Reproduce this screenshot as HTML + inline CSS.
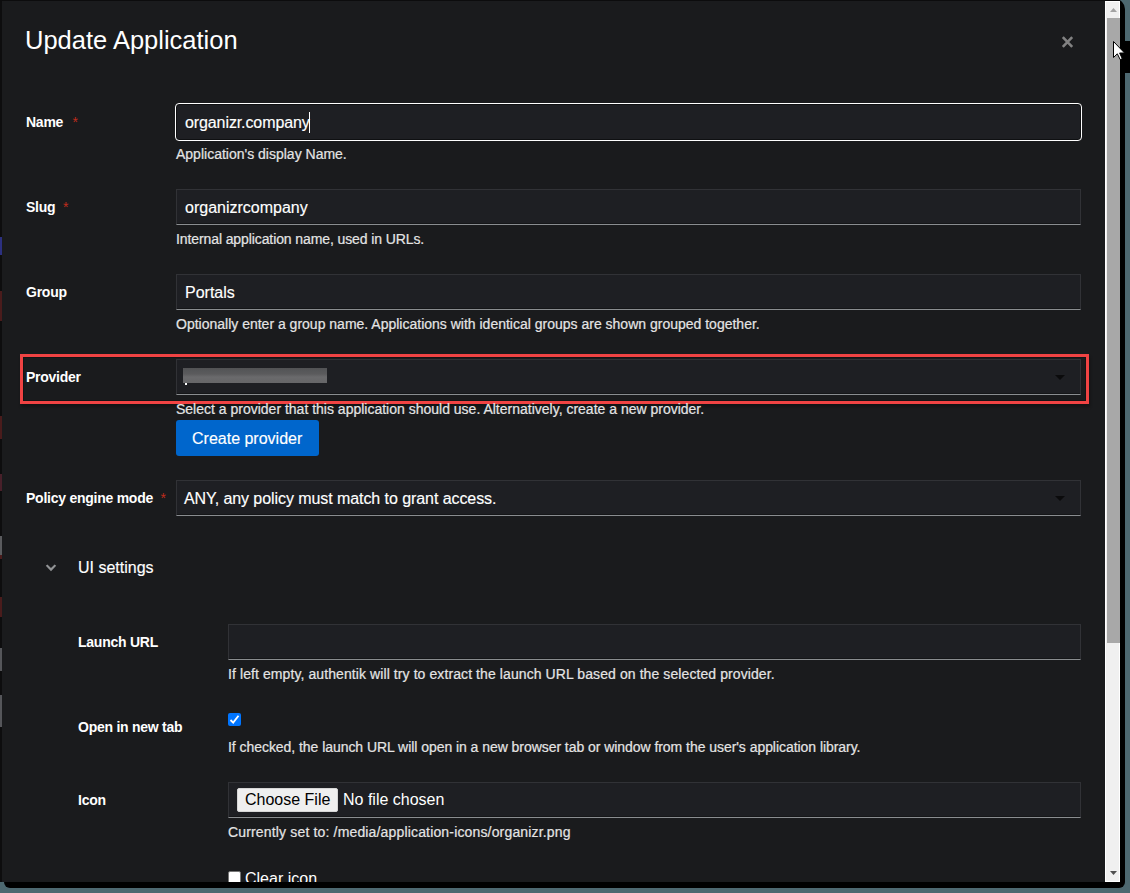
<!DOCTYPE html>
<html><head><meta charset="utf-8">
<style>
html,body{margin:0;padding:0;width:1130px;height:893px;overflow:hidden;background:#4d6870;}
body{position:relative;font-family:"Liberation Sans",sans-serif;}
.a{position:absolute;white-space:nowrap;}
#shadow{position:absolute;left:4px;top:-1px;width:1121px;height:889px;background:#000;border-radius:6px 10px 6px 6px;}
#modal{position:absolute;left:0;top:0;width:1120px;height:882px;background:#1a1b1d;overflow:hidden;}
#lstrip{position:absolute;left:0;top:0;width:2px;height:883px;background:#0d0d0e;}
#tstrip{position:absolute;left:0;top:0;width:1120px;height:1px;background:#0c0c0d;}
.lbl{font-weight:bold;font-size:14px;color:#fff;line-height:16px;letter-spacing:-0.25px;}
.req{color:#c02c1c;font-size:14px;line-height:16px;}
.help{font-size:14px;color:#e4e4e4;line-height:16px;-webkit-text-stroke:0.2px #e4e4e4;}
.inp{position:absolute;box-sizing:border-box;background:#1e1f23;border:1px solid #313236;border-bottom-color:#8a8d90;box-shadow:inset 0 -1px 0 #151618;}
.val{font-size:16px;color:#fff;line-height:18px;-webkit-text-stroke:0.15px #fff;}
</style></head><body>
<div id="shadow"></div>
<div id="modal">
  <div id="lstrip"></div>
  <div id="tstrip"></div>
  <div class="a" style="left:0;top:237px;width:2px;height:18px;background:#2c3080;"></div>
  <div class="a" style="left:0;top:291px;width:2px;height:30px;background:#4a1c1c;"></div>
  <div class="a" style="left:0;top:416px;width:2px;height:23px;background:#4a1c1c;"></div>
  <div class="a" style="left:0;top:474px;width:2px;height:17px;background:#48202a;"></div>
  <div class="a" style="left:0;top:536px;width:2px;height:19px;background:#5a5b5e;"></div>
  <div class="a" style="left:0;top:555px;width:2px;height:4px;background:#4a1c1c;"></div>
  <div class="a" style="left:0;top:597px;width:2px;height:20px;background:#4a1c1c;"></div>
  <div class="a" style="left:0;top:648px;width:2px;height:23px;background:#55565a;"></div>
  <div class="a" style="left:0;top:695px;width:2px;height:32px;background:#55565a;"></div>
  <div class="a" style="left:25px;top:26px;font-size:25.5px;color:#fff;line-height:29px;">Update Application</div>
  <svg class="a" style="left:1061px;top:35px" width="13" height="14" viewBox="0 0 13 14"><path d="M1.8 2.1L11.2 11.8M11.2 2.1L1.8 11.8" stroke="#828282" stroke-width="2.6"/></svg>

  <!-- Name -->
  <div class="a lbl" style="left:26px;top:114px;">Name</div>
  <div class="a req" style="left:72.5px;top:114px;">*</div>
  <div class="inp" style="left:175px;top:103px;width:907px;height:38px;border:1.6px solid #fff;border-radius:4px;box-shadow:inset 0 0 0 1px #0f1012;"></div>
  <div class="a val" style="left:185px;top:114px;letter-spacing:-0.1px;">organizr.company</div>
  <div class="a" style="left:309px;top:112px;width:1px;height:21px;background:#fff;"></div>
  <div class="a help" style="left:176px;top:146px;">Application's display Name.</div>

  <!-- Slug -->
  <div class="a lbl" style="left:26px;top:199px;">Slug</div>
  <div class="a req" style="left:63px;top:199px;">*</div>
  <div class="inp" style="left:176px;top:189px;width:905px;height:36px;"></div>
  <div class="a val" style="left:185px;top:199px;">organizrcompany</div>
  <div class="a help" style="left:176px;top:231px;letter-spacing:-0.1px;">Internal application name, used in URLs.</div>

  <!-- Group -->
  <div class="a lbl" style="left:26px;top:284px;">Group</div>
  <div class="inp" style="left:176px;top:274px;width:905px;height:36px;"></div>
  <div class="a val" style="left:185px;top:284px;">Portals</div>
  <div class="a help" style="left:176px;top:316px;">Optionally enter a group name. Applications with identical groups are shown grouped together.</div>

  <!-- Provider -->
  <div class="a lbl" style="left:26px;top:369px;">Provider</div>
  <div class="inp" style="left:176px;top:359px;width:905px;height:36px;"></div>
  <div class="a" style="left:183px;top:368px;width:144px;height:15px;background:linear-gradient(#525355 0%,#5b5b5d 40%,#6a6a6c 60%,#666668 100%);"></div><div class="a" style="left:185px;top:383px;width:2px;height:2px;background:#fff;"></div>
  <svg class="a" style="left:1055px;top:375px" width="10" height="5" viewBox="0 0 10 5"><path d="M0 0H10L5 5Z" fill="#0b0b0c"/></svg>
  <div class="a" style="left:20px;top:354px;width:1069px;height:50px;box-sizing:border-box;border:3px solid #f04343;box-shadow:1px 3px 3px rgba(0,0,0,0.3), inset 0 0 0 1px rgba(0,0,0,0.25);"></div>
  <div class="a help" style="left:176px;top:401px;">Select a provider that this application should use. Alternatively, create a new provider.</div>
  <div class="a" style="left:176px;top:420px;width:143px;height:36px;background:#0066cc;border-radius:3px;"></div>
  <div class="a val" style="left:192px;top:430px;">Create provider</div>

  <!-- Policy engine mode -->
  <div class="a lbl" style="left:26px;top:490px;">Policy engine mode</div>
  <div class="a req" style="left:160.5px;top:490px;">*</div>
  <div class="inp" style="left:176px;top:480px;width:905px;height:36px;"></div>
  <div class="a val" style="left:184px;top:490px;letter-spacing:-0.07px;">ANY, any policy must match to grant access.</div>
  <svg class="a" style="left:1055px;top:496px" width="10" height="5" viewBox="0 0 10 5"><path d="M0 0H10L5 5Z" fill="#0b0b0c"/></svg>

  <!-- UI settings -->
  <svg class="a" style="left:45px;top:564px" width="12" height="8" viewBox="0 0 12 8"><path d="M0.8 1.7L2.4 0.6L6 4.1L9.6 0.6L11.2 1.7L6 7.2Z" fill="#929496"/></svg>
  <div class="a val" style="left:78px;top:559px;">UI settings</div>

  <!-- Launch URL -->
  <div class="a lbl" style="left:78px;top:634px;">Launch URL</div>
  <div class="inp" style="left:228px;top:624px;width:853px;height:36px;"></div>
  <div class="a help" style="left:228px;top:666px;letter-spacing:0.09px;">If left empty, authentik will try to extract the launch URL based on the selected provider.</div>

  <!-- Open in new tab -->
  <div class="a lbl" style="left:78px;top:719px;">Open in new tab</div>
  <div class="a" style="left:228px;top:713px;width:13px;height:13px;background:#0075ff;border-radius:2px;"></div>
  <svg class="a" style="left:228px;top:713px" width="13" height="13" viewBox="0 0 13 13"><path d="M2.5 7L5.2 9.6L10.5 2.8" stroke="#fff" stroke-width="1.8" fill="none"/></svg>
  <div class="a help" style="left:228px;top:739px;letter-spacing:-0.05px;">If checked, the launch URL will open in a new browser tab or window from the user's application library.</div>

  <!-- Icon -->
  <div class="a lbl" style="left:78px;top:792px;">Icon</div>
  <div class="inp" style="left:228px;top:782px;width:853px;height:36px;"></div>
  <div class="a" style="left:237px;top:788px;width:101px;height:24px;box-sizing:border-box;background:#efefef;border:1px solid #d6d6d6;border-radius:2px;"></div>
  <div class="a" style="left:245px;top:791px;font-size:16px;color:#000;line-height:18px;">Choose File</div>
  <div class="a" style="left:343px;top:791px;font-size:16px;color:#fff;line-height:18px;">No file chosen</div>
  <div class="a help" style="left:228px;top:824px;letter-spacing:0.16px;">Currently set to: /media/application-icons/organizr.png</div>

  <div class="a" style="left:228px;top:871px;width:13px;height:13px;box-sizing:border-box;background:#fff;border:1px solid #767676;border-radius:2px;"></div>
  <div class="a" style="left:245px;top:870px;font-size:16px;color:#fff;line-height:18px;">Clear icon</div>

  <!-- scrollbar -->
  <div class="a" style="left:1105px;top:1px;width:15px;height:881px;box-sizing:border-box;background:#f0f0f0;border:1px solid #fff;"></div>
  <div class="a" style="left:1107px;top:18px;width:13px;height:625px;background:#a8a8a8;"></div>
  <svg class="a" style="left:1105px;top:1px" width="15" height="17" viewBox="0 0 15 17"><path d="M5 11H12L8.5 7Z" fill="#a3a3a3"/></svg>
  <svg class="a" style="left:1105px;top:866px" width="15" height="17" viewBox="0 0 15 17"><path d="M5 5H12L8.5 9Z" fill="#505050"/></svg>
</div>
<div class="a" style="left:1125px;top:41px;width:5px;height:32px;background:#000;"></div>
<svg class="a" style="left:1112px;top:40px;overflow:visible" width="14" height="21" viewBox="0 0 14 21"><path d="M1.5 1.5L1.5 17.5L5.3 13.8L8.2 19.6L10.3 18.7L7.6 13L12.6 13Z" fill="#fff" stroke="#000" stroke-width="1" stroke-linejoin="miter"/></svg>
</body></html>
